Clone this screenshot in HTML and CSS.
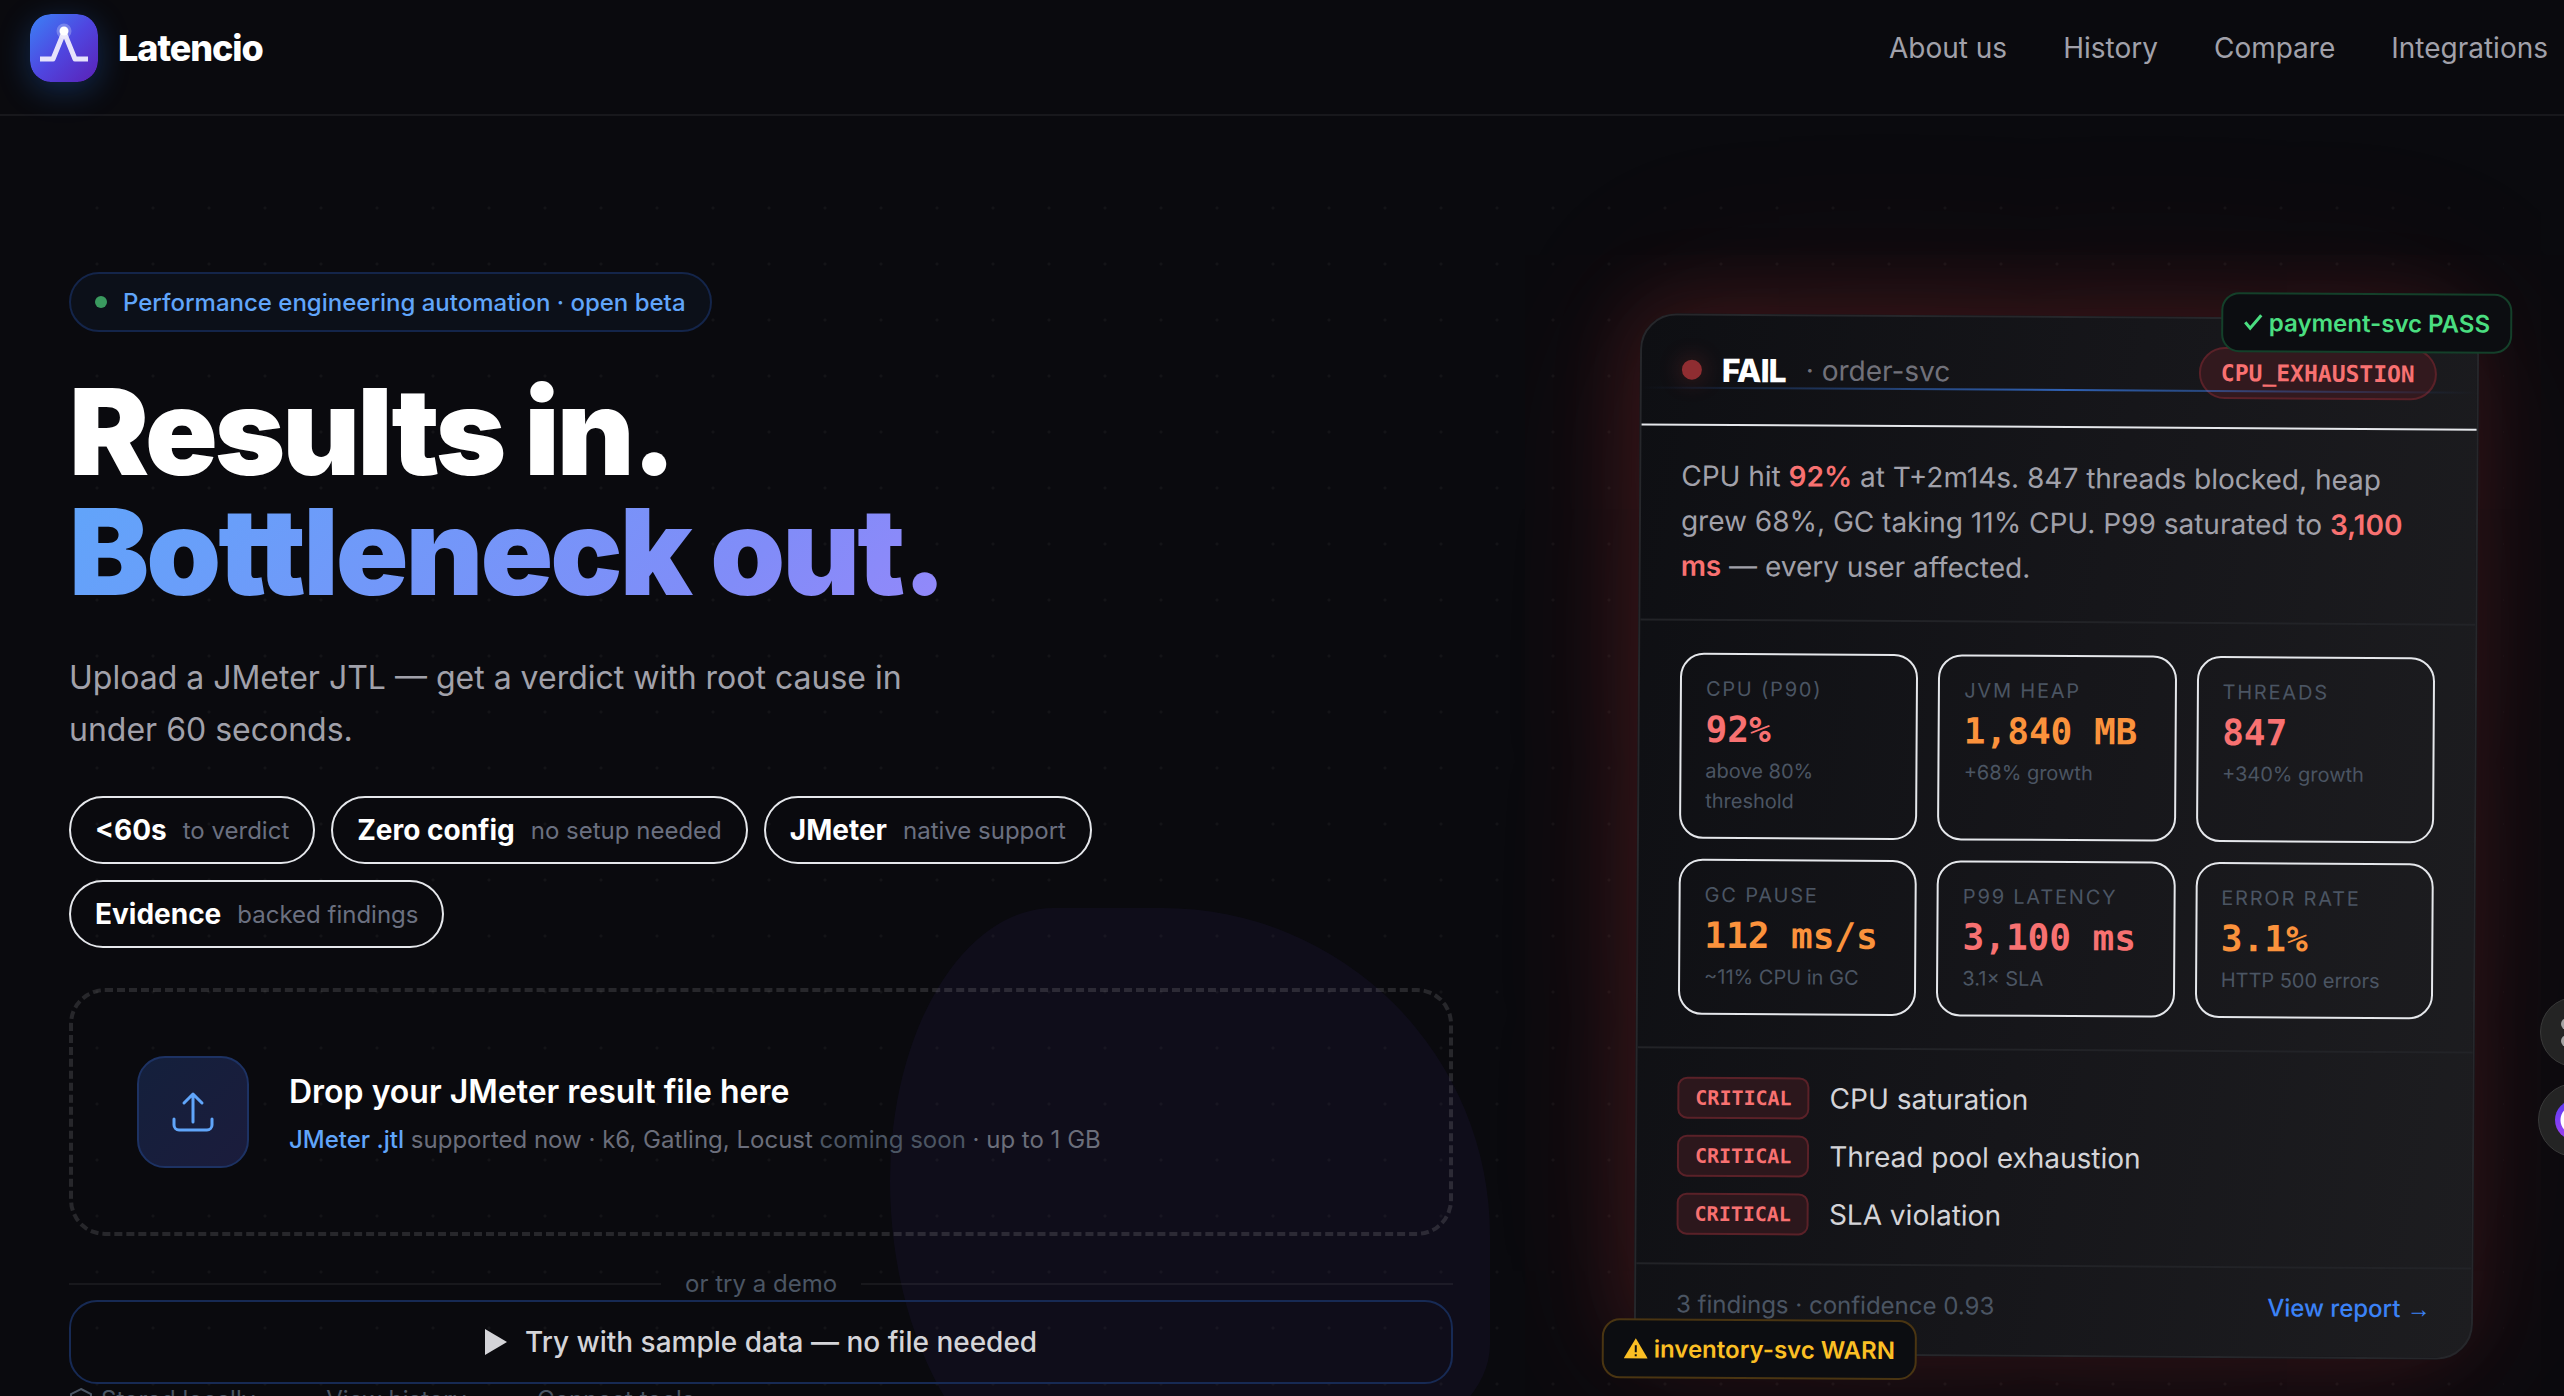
FILE: index.html
```html
<!DOCTYPE html>
<html lang="en">
<head>
  <meta charset="UTF-8" />
  <meta name="viewport" content="width=device-width, initial-scale=1.0" />
  <title>Latencio</title>
  <link rel="stylesheet" href="styles.css">
</head>
<body>
  <header class="header">
    <a class="brand" href="#">
      <svg class="brand-logo" viewBox="0 0 68 68" aria-hidden="true">
        <defs>
          <linearGradient id="logoBg" x1="0" y1="0" x2="1" y2="1">
            <stop offset="0" stop-color="#3b82f6" />
            <stop offset="0.5" stop-color="#4f46e0" />
            <stop offset="1" stop-color="#5b21b6" />
          </linearGradient>
        </defs>
        <rect width="68" height="68" rx="21" fill="url(#logoBg)" />
        <path d="M10 45h13l11-27 11 27h13" fill="none" stroke="#e6e2fb" stroke-width="5" stroke-linejoin="round" />
        <circle cx="34" cy="17" r="7.5" fill="#fff" opacity="0.25" />
        <circle cx="34" cy="17" r="4.5" fill="#fff" />
      </svg>
      <span class="brand-name">Latencio</span>
    </a>
    <nav class="nav">
      <a href="#about">About us</a>
      <a href="#history">History</a>
      <a href="#compare">Compare</a>
      <a href="#integrations">Integrations</a>
    </nav>
  </header>

  <main class="hero">
    <div class="blob"></div>

    <section class="intro">
      <div class="beta"><span class="beta-dot"></span>Performance engineering automation · open beta</div>
      <h1 class="title">Results in.<br><span class="title-accent">Bottleneck out.</span></h1>
      <p class="lead">Upload a JMeter JTL — get a verdict with root cause in under 60 seconds.</p>

      <ul class="pills">
        <li class="pill"><strong>&lt;60s</strong><span>to verdict</span></li>
        <li class="pill"><strong>Zero config</strong><span>no setup needed</span></li>
        <li class="pill"><strong>JMeter</strong><span>native support</span></li>
        <li class="pill"><strong>Evidence</strong><span>backed findings</span></li>
      </ul>

      <label class="dropzone" for="resultFile">
        <input type="file" id="resultFile" accept=".jtl" />
        <span class="drop-icon">
          <svg viewBox="0 0 48 48" aria-hidden="true">
            <path d="M5 31v6a5 5 0 0 0 5 5h28a5 5 0 0 0 5-5v-6M24 34V6M15 15L24 6l9 9" />
          </svg>
        </span>
        <span class="drop-text">
          <span class="drop-title">Drop your JMeter result file here</span>
          <span class="drop-sub"><b>JMeter .jtl</b> supported now · k6, Gatling, Locust <i>coming soon</i> · up to 1 GB</span>
        </span>
      </label>

      <div class="divider">or try a demo</div>
      <button class="demo" type="button">
        <svg viewBox="0 0 22 26" aria-hidden="true"><path d="M0 0l22 13L0 26z" /></svg>
        Try with sample data — no file needed
      </button>

      <div class="links">
        <span class="stored">
          <svg viewBox="0 0 24 26" aria-hidden="true"><path d="M12 2l10 5v11l-10 6-10-6V7z" /></svg>
          Stored locally
        </span>
        <span>·</span>
        <a href="#history">View history</a>
        <span>·</span>
        <a href="#integrations">Connect tools</a>
      </div>
    </section>

    <section class="preview">
      <article class="card">
        <div class="card-head">
          <span class="status-dot"></span>
          <h2>FAIL</h2>
          <span class="service">· order-svc</span>
          <span class="cause">CPU_EXHAUSTION</span>
        </div>
        <p class="summary">CPU hit <b>92%</b> at T+2m14s. 847 threads blocked, heap grew 68%, GC taking 11% CPU. P99 saturated to <b>3,100 ms</b> — every user affected.</p>
        <div class="metrics">
          <div class="metric">
            <div class="metric-label">CPU (P90)</div>
            <div class="metric-value red">92%</div>
            <div class="metric-note">above 80% threshold</div>
          </div>
          <div class="metric">
            <div class="metric-label">JVM HEAP</div>
            <div class="metric-value orange">1,840 MB</div>
            <div class="metric-note">+68% growth</div>
          </div>
          <div class="metric">
            <div class="metric-label">THREADS</div>
            <div class="metric-value red">847</div>
            <div class="metric-note">+340% growth</div>
          </div>
          <div class="metric">
            <div class="metric-label">GC PAUSE</div>
            <div class="metric-value orange">112 ms/s</div>
            <div class="metric-note">~11% CPU in GC</div>
          </div>
          <div class="metric">
            <div class="metric-label">P99 LATENCY</div>
            <div class="metric-value red">3,100 ms</div>
            <div class="metric-note">3.1× SLA</div>
          </div>
          <div class="metric">
            <div class="metric-label">ERROR RATE</div>
            <div class="metric-value orange">3.1%</div>
            <div class="metric-note">HTTP 500 errors</div>
          </div>
        </div>
        <ul class="findings">
          <li><span class="severity">CRITICAL</span>CPU saturation</li>
          <li><span class="severity">CRITICAL</span>Thread pool exhaustion</li>
          <li><span class="severity">CRITICAL</span>SLA violation</li>
        </ul>
        <div class="card-foot">
          <span>3 findings · confidence 0.93</span>
          <a href="#report">View report <span class="arrow">→</span></a>
        </div>
        <div class="scanline"></div>
      </article>

      <div class="chip chip-pass">
        <svg viewBox="0 0 20 24" aria-hidden="true"><path d="M2 12l5 6L18 5" fill="none" stroke="currentColor" stroke-width="3" /></svg>
        payment-svc PASS
      </div>
      <div class="chip chip-warn">
        <svg viewBox="0 0 24 24" aria-hidden="true">
          <path d="M12 2l12 20H0z" fill="currentColor" />
          <path d="M12 9v7M12 18v2" fill="none" stroke="#0c0d11" stroke-width="2" />
        </svg>
        inventory-svc WARN
      </div>
    </section>
  </main>

  <div class="dock">
    <button class="dock-btn" type="button" aria-label="Apps">
      <svg viewBox="0 0 40 40" aria-hidden="true">
        <circle cx="12" cy="12" r="6" /><circle cx="29" cy="12" r="6" />
        <circle cx="12" cy="29" r="6" /><circle cx="29" cy="29" r="6" />
      </svg>
    </button>
    <button class="dock-btn dock-btn-lg" type="button" aria-label="Assistant"><span class="ring"></span></button>
  </div>
</body>
</html>
```

FILE: styles.css
```css
* {
  box-sizing: border-box;
}
body {
  margin: 0;
  min-height: 100vh;
  overflow: hidden;
  background: #0a0a0e;
  color: #fff;
  font-family: Inter, "Liberation Sans", sans-serif;
  font-size: 24px;
}
h1, h2, p, ul {
  margin: 0;
  padding: 0;
}
ul {
  list-style: none;
}
a {
  color: inherit;
  text-decoration: none;
}
button {
  font: inherit;
  color: inherit;
  cursor: pointer;
}

/* header */
.header {
  display: flex;
  justify-content: space-between;
  align-items: center;
  padding: 14px 16px 32px 30px;
  border-bottom: 2px solid #18181c;
}
.brand {
  display: flex;
  align-items: center;
  gap: 20px;
}
.brand-logo {
  width: 68px;
  height: 68px;
  border-radius: 21px;
  box-shadow: 0 8px 32px rgba(37, 120, 235, 0.3);
}
.brand-name {
  font-size: 36px;
  font-weight: 800;
  letter-spacing: -0.03em;
}
.nav {
  display: flex;
  gap: 56px;
  font-size: 28px;
  color: #a1a1aa;
}

/* hero */
.hero {
  position: relative;
  display: grid;
  grid-template-columns: 1.65fr 1fr;
  align-items: start;
  gap: 184px;
  padding: 156px 88px 40px 69px;
}
.hero::before {
  content: "";
  position: absolute;
  inset: 60px 60px 0;
  background: radial-gradient(circle, rgba(255, 255, 255, 0.04) 1px, transparent 2px) 9px 4px / 56px 56px;
}
.blob {
  position: absolute;
  top: 792px;
  left: 890px;
  width: 600px;
  height: 600px;
  background: rgba(100, 60, 220, 0.06);
  border-radius: 30% 60% 70% 40% / 50% 60% 30% 60%;
}
.intro {
  position: relative;
}
.beta {
  display: inline-flex;
  align-items: center;
  gap: 16px;
  height: 60px;
  padding: 0 24px;
  border: 2px solid #14254a;
  border-radius: 30px;
  background: #0c1019;
  color: #60a5fa;
  font-weight: 500;
}
.beta-dot {
  width: 12px;
  height: 12px;
  border-radius: 50%;
  background: #3a9a5f;
}
.title {
  margin-top: 40px;
  font-size: 120px;
  line-height: 120px;
  font-weight: 900;
  letter-spacing: -0.025em;
}
.title-accent {
  background: linear-gradient(135deg, #60a5fa, #818cf8 75%, #9488fa);
  -webkit-background-clip: text;
  background-clip: text;
  color: transparent;
}
.lead {
  max-width: 900px;
  margin-top: 40px;
  font-size: 32px;
  line-height: 52px;
  color: #a1a1aa;
}
.pills {
  display: flex;
  flex-wrap: wrap;
  gap: 16px;
  max-width: 1060px;
  margin-top: 40px;
}
.pill {
  display: flex;
  align-items: center;
  gap: 16px;
  height: 68px;
  padding: 0 24px;
  border: 2px solid #e5e7eb;
  border-radius: 34px;
  color: #6b7080;
}
.pill strong {
  font-size: 28px;
  color: #fff;
}
.dropzone {
  display: flex;
  align-items: center;
  gap: 40px;
  margin-top: 40px;
  padding: 64px;
  border: 4px dashed rgba(255, 255, 255, 0.12);
  border-radius: 36px;
  cursor: pointer;
}
.dropzone input {
  position: absolute;
  width: 1px;
  height: 1px;
  opacity: 0;
}
.drop-icon {
  display: flex;
  align-items: center;
  justify-content: center;
  width: 112px;
  height: 112px;
  border: 2px solid #1d3263;
  border-radius: 28px;
  background: linear-gradient(135deg, #14203c, #1b1c3c);
}
.drop-icon svg {
  width: 48px;
  fill: none;
  stroke: #60a5fa;
  stroke-width: 3;
  stroke-linecap: round;
  stroke-linejoin: round;
}
.drop-text {
  display: flex;
  flex-direction: column;
  gap: 6px;
  padding-top: 2px;
}
.drop-title {
  font-size: 32px;
  line-height: 48px;
  font-weight: 600;
}
.drop-sub {
  line-height: 36px;
  color: #6b6e7b;
}
.drop-sub b {
  font-weight: 500;
  color: #60a5fa;
}
.drop-sub i {
  font-style: normal;
  color: #4b5563;
}
.divider {
  display: flex;
  align-items: center;
  gap: 24px;
  margin-top: 32px;
  line-height: 32px;
  color: #4b5563;
}
.divider::before,
.divider::after {
  content: "";
  flex: 1;
  height: 2px;
  background: rgba(255, 255, 255, 0.06);
}
.demo {
  display: flex;
  align-items: center;
  justify-content: center;
  gap: 18px;
  width: 100%;
  height: 84px;
  border: 2px solid #172a54;
  border-radius: 28px;
  background: transparent;
  color: #d4d4d8;
  font-size: 28px;
  font-weight: 500;
}
.demo svg {
  width: 22px;
  fill: currentColor;
}
.links {
  display: flex;
  gap: 32px;
  line-height: 32px;
  color: #4b5563;
}
.stored {
  display: flex;
  gap: 8px;
}
.stored svg {
  width: 24px;
  fill: none;
  stroke: currentColor;
  stroke-width: 2;
}

/* report preview */
.preview {
  position: relative;
  margin-top: 44px;
  transform: rotate(0.36deg);
}
.card {
  position: relative;
  border: 2px solid #26272b;
  border-radius: 36px;
  background: linear-gradient(100deg, #0e0f13, #16161a 50%, #1d1d20);
  box-shadow:
    -12px -12px 80px rgba(239, 68, 68, 0.16),
    0 0 200px rgba(239, 68, 68, 0.13);
}
.card-head {
  display: flex;
  align-items: center;
  gap: 20px;
  height: 110px;
  padding: 0 40px;
  border-bottom: 2px solid #e5e7eb;
}
.card-head h2 {
  font-size: 32px;
  font-weight: 800;
  letter-spacing: -0.03em;
}
.status-dot {
  width: 20px;
  height: 20px;
  border-radius: 50%;
  background: #8f2d31;
  box-shadow: 0 0 24px rgba(239, 68, 68, 0.3);
}
.service {
  font-size: 28px;
  color: #71717a;
}
.cause {
  height: 52px;
  margin-left: auto;
  padding: 0 20px;
  border: 2px solid #5a2128;
  border-radius: 26px;
  background: #32191e;
  color: #f87171;
  font: bold 23px/48px "DejaVu Sans Mono", monospace;
}
.summary {
  padding: 28px 40px 30px;
  border-bottom: 2px solid #222327;
  font-size: 28px;
  line-height: 45px;
  color: #a1a1aa;
}
.summary b {
  font-weight: 600;
  color: #f87171;
}
.metrics {
  display: grid;
  grid-template-columns: repeat(3, 1fr);
  gap: 20px;
  padding: 32px 40px;
  border-bottom: 2px solid #222327;
}
.metric {
  padding: 19px 24px 21px;
  border: 2px solid #e5e7eb;
  border-radius: 24px;
  font-size: 20px;
  line-height: 30px;
  color: #4b5563;
}
.metric-label {
  letter-spacing: 0.09em;
}
.metric-value {
  margin: 4px 0;
  font: bold 36px/44px "DejaVu Sans Mono", monospace;
  white-space: nowrap;
}
.red {
  color: #f87171;
}
.orange {
  color: #fb923c;
}
.findings {
  display: flex;
  flex-direction: column;
  gap: 16px;
  padding: 28px 40px;
  border-bottom: 2px solid #222327;
  font-size: 28px;
  line-height: 42px;
  color: #d4d4d8;
}
.findings li {
  display: flex;
  gap: 20px;
}
.severity {
  padding: 0 16px;
  border: 2px solid #5a2128;
  border-radius: 10px;
  background: #2c171c;
  color: #f87171;
  font: bold 20px/38px "DejaVu Sans Mono", monospace;
}
.card-foot {
  display: flex;
  justify-content: space-between;
  padding: 23px 40px 31px;
  line-height: 34px;
  color: #4b5563;
}
.card-foot a {
  color: #3b82f6;
  font-weight: 500;
}
.arrow {
  font-family: "Liberation Sans", sans-serif;
  font-weight: 400;
}
.scanline {
  position: absolute;
  top: 71px;
  left: 0;
  right: 0;
  height: 2px;
  background: linear-gradient(90deg, transparent, rgba(59, 130, 246, 0.7), transparent);
}
.chip {
  position: absolute;
  display: flex;
  align-items: center;
  gap: 6px;
  height: 60px;
  padding: 0 20px;
  border: 2px solid;
  border-radius: 18px;
  background: #0c0d11;
  font-weight: 600;
}
.chip svg {
  height: 24px;
}
.chip-pass {
  top: -25px;
  right: -33px;
  border-color: #14402a;
  color: #4ade80;
}
.chip-warn {
  bottom: -24px;
  left: -32px;
  border-color: #4a3512;
  color: #fbbf24;
}

/* floating buttons at the window edge */
.dock {
  position: fixed;
  top: 997px;
  right: -48px;
  display: flex;
  flex-direction: column;
  align-items: center;
  gap: 16px;
}
.dock-btn {
  display: flex;
  align-items: center;
  justify-content: center;
  width: 70px;
  height: 70px;
  padding: 0;
  border: 1px solid #3a3a3a;
  border-radius: 50%;
  background: #242424;
}
.dock-btn svg {
  width: 40px;
  fill: #a3a3a3;
}
.dock-btn-lg {
  width: 74px;
  height: 74px;
}
.ring {
  width: 40px;
  height: 40px;
  border-radius: 50%;
  background: radial-gradient(circle, #fff 14px, transparent 15px), linear-gradient(#5b3df5, #a040f0);
}
```
